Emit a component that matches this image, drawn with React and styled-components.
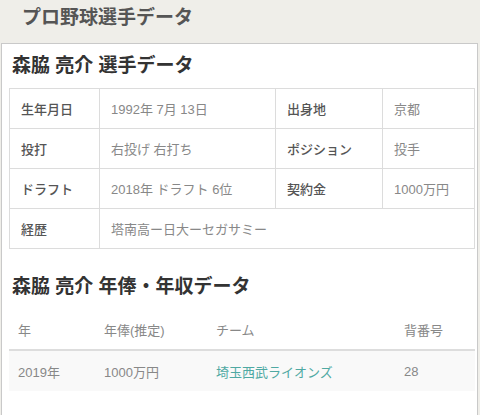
import React from "react";
import styled, { createGlobalStyle } from "styled-components";

const player = "森脇 亮介";

const profile = [
  [["生年月日", "1992年 7月 13日"], ["出身地", "京都"]],
  [["投打", "右投げ 右打ち"], ["ポジション", "投手"]],
  [["ドラフト", "2018年 ドラフト 6位"], ["契約金", "1000万円"]],
];

const salaries = [
  { year: "2019年", pay: "1000万円", team: "埼玉西武ライオンズ", number: "28" },
];

const GlobalStyle = createGlobalStyle`
  html, body {
    margin: 0;
    background: #efeee9;
    font-family: "Liberation Sans", "Noto Sans CJK JP", sans-serif;
  }
`;

const App = () => (
  <>
    <GlobalStyle />
    <Page>
      <SiteTitle>プロ野球選手データ</SiteTitle>
      <Card>
        <Heading>{player} 選手データ</Heading>
        <InfoTable>
          <colgroup>
            <col style={{ width: 90 }} />
            <col style={{ width: 176 }} />
            <col style={{ width: 107 }} />
            <col />
          </colgroup>
          <tbody>
            {profile.map((row, i) => (
              <tr key={i}>
                {row.map(([label, value]) => (
                  <React.Fragment key={label}>
                    <Label>{label}</Label>
                    <Value>{value}</Value>
                  </React.Fragment>
                ))}
              </tr>
            ))}
            <tr>
              <Label>経歴</Label>
              <Value colSpan={3}>塔南高ー日大ーセガサミー</Value>
            </tr>
          </tbody>
        </InfoTable>

        <Heading top="24px">{player} 年俸・年収データ</Heading>
        <SalaryTable>
          <colgroup>
            <col style={{ width: 86 }} />
            <col style={{ width: 112 }} />
            <col style={{ width: 188 }} />
            <col />
          </colgroup>
          <thead>
            <tr>
              <Th>年</Th>
              <Th>年俸(推定)</Th>
              <Th>チーム</Th>
              <Th>背番号</Th>
            </tr>
          </thead>
          <tbody>
            {salaries.map(s => (
              <StripeRow key={s.year}>
                <Td>{s.year}</Td>
                <Td>{s.pay}</Td>
                <Td>
                  <TeamLink href="#">{s.team}</TeamLink>
                </Td>
                <Td>{s.number}</Td>
              </StripeRow>
            ))}
          </tbody>
        </SalaryTable>
      </Card>
    </Page>
  </>
);

export default App;

const Page = styled.div`
  height: 415px;
  overflow: hidden;
`;

const SiteTitle = styled.h1`
  margin: 0;
  padding: 5px 0 0 22px;
  height: 39px;
  box-sizing: border-box;
  font-size: 19px;
  line-height: 26px;
  font-weight: bold;
  color: #555;
`;

const Card = styled.div`
  margin: 4px 2px 0 1px;
  background: #fff;
  border: 1px solid #c9c9c9;
  border-bottom: none;
  padding: 0 2px 40px 7px;
  min-height: 400px;
`;

const Heading = styled.h2`
  margin: ${props => props.top || "8px"} 0 0 3px;
  font-size: 19px;
  line-height: 28px;
  font-weight: bold;
  color: #333;
`;

const InfoTable = styled.table`
  width: 466px;
  margin-top: 8px;
  border-collapse: collapse;
  table-layout: fixed;
  font-size: 13px;
`;

const Label = styled.th`
  height: 39px;
  padding: 0 0 0 11px;
  border: 1px solid #dcdcdc;
  text-align: left;
  font-weight: 500;
  color: #555;
`;

const Value = styled.td`
  height: 39px;
  padding: 0 0 0 11px;
  border: 1px solid #dcdcdc;
  color: #888;
`;

const SalaryTable = styled.table`
  width: 466px;
  margin-top: 8px;
  border-collapse: collapse;
  table-layout: fixed;
  font-size: 13px;
`;

const Th = styled.th`
  height: 40px;
  padding: 0 0 0 9px;
  border-bottom: 2px solid #dddddd;
  text-align: left;
  font-weight: normal;
  color: #888;
`;

const StripeRow = styled.tr`
  background: #f9f9f9;
`;

const Td = styled.td`
  height: 40px;
  padding: 0 0 0 9px;
  color: #888;
`;

const TeamLink = styled.a`
  color: #4fa9a3;
  text-decoration: none;
`;
